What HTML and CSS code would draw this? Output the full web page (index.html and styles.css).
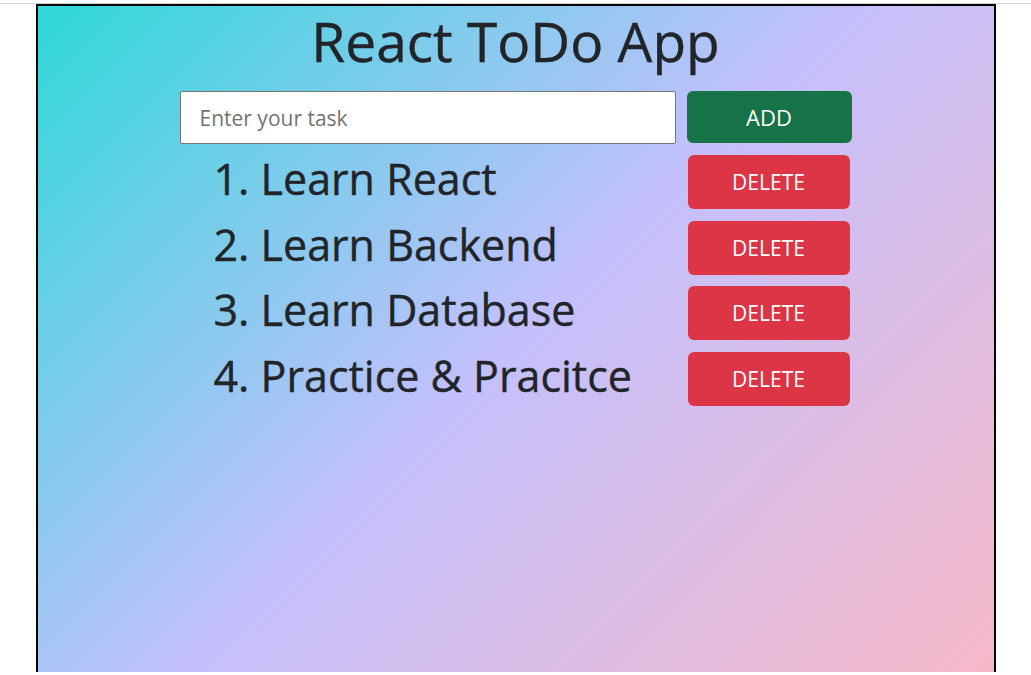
FILE: index.html
```html
<!DOCTYPE html>
<html lang="en">
<head>
<meta charset="utf-8">
<title>React ToDo App</title>
<link rel="stylesheet" href="styles.css">
</head>
<body>
<div class="frame">
  <main class="app">
    <h1 class="title">React ToDo App</h1>
    <div class="board">
      <form class="add-row">
        <input class="task-input" type="text" placeholder="Enter your task">
        <button class="btn btn-add" type="button">ADD</button>
      </form>
      <ul class="todo-list">
        <li class="todo-item"><span class="todo-text">1. Learn React</span><button class="btn btn-delete" type="button">DELETE</button></li>
        <li class="todo-item"><span class="todo-text">2. Learn Backend</span><button class="btn btn-delete" type="button">DELETE</button></li>
        <li class="todo-item"><span class="todo-text">3. Learn Database</span><button class="btn btn-delete" type="button">DELETE</button></li>
        <li class="todo-item"><span class="todo-text">4. Practice &amp; Pracitce</span><button class="btn btn-delete" type="button">DELETE</button></li>
      </ul>
    </div>
  </main>
</div>
</body>
</html>
```

FILE: styles.css
```css
html, body {
  margin: 0;
  padding: 0;
  background: #fff;
  overflow: hidden;
  height: 100%;
}

body {
  font-family: "Open Sans", "Noto Sans", sans-serif;
  color: #212529;
}

.frame {
  margin-top: 3px;
  border-top: 1px solid #d3d3d3;
}

.app {
  box-sizing: border-box;
  width: 960px;
  height: 668px;
  margin: 0 auto;
  border: 2px solid #000;
  border-bottom: none;
  background: linear-gradient(135deg, #2ed9d8 0%, #c4c0fc 50%, #f7b9c9 100%);
}

.title {
  margin: 0;
  padding-top: 0;
  text-align: center;
  font-size: 55px;
  font-weight: 400;
  line-height: 70px;
  letter-spacing: 0;
  -webkit-text-stroke: 0.4px #212529;
}

.board {
  width: 672px;
  margin: 15px auto 0 142px;
}

.add-row {
  display: flex;
  gap: 11px;
  margin: 0;
}

.task-input {
  box-sizing: border-box;
  width: 496px;
  height: 53px;
  border: 1px solid #767676;
  border-radius: 2px;
  padding: 0 19px;
  font-family: inherit;
  font-size: 21px;
  color: #212529;
  background: #fff;
}

.task-input::placeholder {
  color: #737373;
}

.btn {
  box-sizing: border-box;
  border: none;
  border-radius: 6px;
  color: #fff;
  font-family: inherit;
  font-size: 21px;
  cursor: pointer;
}

.btn-add {
  width: 165px;
  height: 52px;
  background: #157347;
  font-size: 22px;
}

.todo-list {
  list-style: none;
  margin: 11px 0 0;
  padding: 0;
  display: flex;
  flex-direction: column;
  gap: 11px;
}

.todo-item {
  display: flex;
  align-items: center;
  justify-content: space-between;
  height: 54.5px;
  padding-left: 34px;
  padding-right: 2px;
}

.todo-text {
  font-size: 43px;
  font-weight: 400;
  letter-spacing: 0;
  line-height: 54px;
  margin-top: -6px;
  -webkit-text-stroke: 0.4px #212529;
}

.btn-delete {
  width: 162px;
  height: 54px;
  background: #dc3545;
}
```
